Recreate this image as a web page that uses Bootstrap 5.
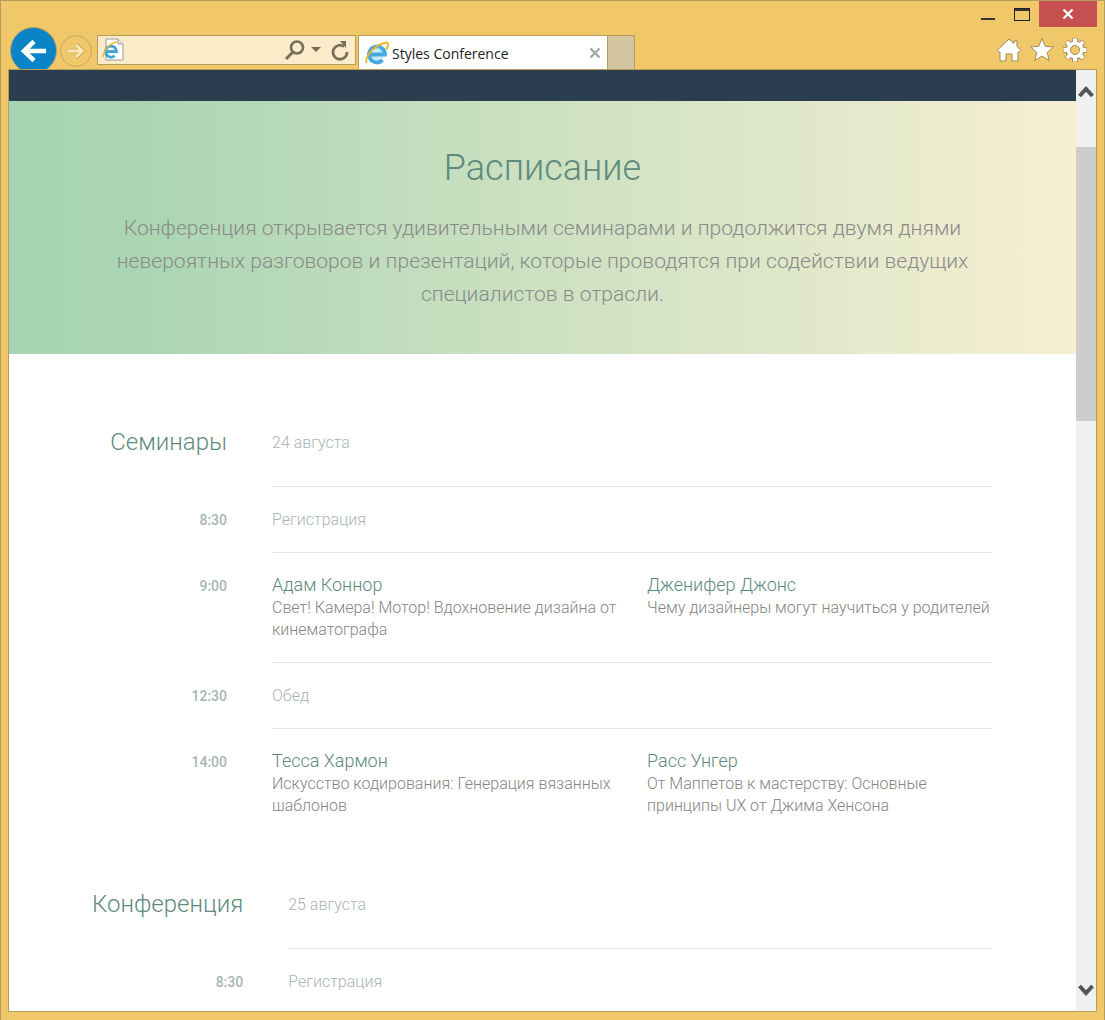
<!doctype html>
<html lang="ru">
<head>
<meta charset="utf-8">
<title>Styles Conference</title>
<link href="https://cdn.jsdelivr.net/npm/bootstrap@5.3.0/dist/css/bootstrap.min.css" rel="stylesheet">
<style>
html,body{height:100%;margin:0;overflow:hidden}
body{font-family:Roboto,"Liberation Sans",sans-serif;background:#f0c869}
.ie-window{height:1020px;width:1105px;border:1px solid #b89c5a;border-bottom-width:0;background:#f0c869;overflow:hidden}
.ie-caps{height:26px;padding-right:7px}
.cap-btn{height:26px;display:flex;align-items:center;justify-content:flex-end}
.cap-min{width:29px;padding:8px 14px 0 0}
.cap-max{width:30px;padding-right:9px}
.cap-close{width:58px;background:#c75050;justify-content:center}
.ie-bar{height:42px;padding-left:9px;position:relative}
.back-btn{width:47px;height:47px;border-radius:50%;background:#0a84c6;border:1px solid #b89c5a;flex:none;position:relative;z-index:1}
.fwd-btn{width:32px;height:32px;border-radius:50%;border:1px solid #c9a95f;flex:none;margin:8px 5px 0 3px;background:#f0c869}
.addr{width:259px;height:30px;margin-top:8px;border:1px solid #b89c5a;background:#faebc9;padding:0 6px 0 4px;flex:none}
.drop-ic{margin-left:5px}
.reload-ic{margin-left:10px}
.ie-tab{width:250px;height:35px;margin:8px 0 0 2px;background:#fff;border:1px solid #b89c5a;border-bottom:0;font-family:"Open Sans","Liberation Sans",sans-serif;font-size:14px;color:#222;padding:0 6px 0 6px;flex:none}
.tab-ic{margin-right:2px}
.tab-x{color:#a5a5a5}
.ie-new{width:27px;height:35px;margin-top:8px;background:#d3c4a0;border:1px solid #b89c5a;border-left:0;flex:none}
.tools{margin-left:auto;padding-right:16px;padding-top:10px;gap:7px}
.ie-frame{height:943px;margin:0 7px;border:1px solid #b89c5a;background:#fff;position:relative;z-index:2;overflow:hidden}
.page-pane{flex:1;min-width:0;overflow:hidden}
.scroll-col{width:20px;flex:none;background:#f0f0f0}
.scroll-arrow{height:42px;flex:none}
.scroll-thumb{height:274px;background:#cdcdcd;margin-top:35px}
.nav-strip{height:31px;background:#2a3e50}
.hero-band{height:253px;background:linear-gradient(90deg,#a6d4b0 0%,#a9d5b2 10%,#c9e0c0 46%,#f6efd2 100%);padding-top:44px;text-align:center}
.hero-title{font-size:36px;font-weight:300;color:#5f8a7e;line-height:47px;margin:0 0 19px}
.hero-text{width:900px;font-size:21.1px;font-weight:300;line-height:33px;color:#8a8a8a;margin:0 auto}
.sched-wrap{width:900px;margin:0 0 0 83px;padding-top:44px}
.sched{width:100%;margin-bottom:21px;font-size:16px;line-height:22px}
.sched td,.sched th{vertical-align:top;padding:22px 0 21px}
.sched th{width:20%;padding:22px 45px 21px 0;text-align:right;font-size:14px;font-weight:500;color:#a9b4b8;white-space:nowrap}
.sched td{border-bottom:1px solid #dfe3e6;color:#a9b4b8;font-weight:300}
.sched tr:last-child td{border-bottom:0;padding-bottom:22px}
.sched .sect-head th{font-size:24px;font-weight:300;color:#5f8a7e;line-height:44px;padding:22px 45px 21px 0}
.sched .sect-head td{line-height:44px;padding:23px 0 21px}
.spk-name{font-size:18px;font-weight:300;color:#5b8a7b;line-height:20px;margin-bottom:2px}
.spk-talk{color:#858585;font-weight:300;line-height:22px}
.spk-row{--bs-gutter-x:30px}
</style>
</head>
<body>
<div class="ie-window d-flex flex-column">
  <div class="ie-caps d-flex justify-content-end">
    <div class="cap-btn cap-min"><svg width="14" height="3"><rect width="14" height="2" y="1" fill="#333"/></svg></div>
    <div class="cap-btn cap-max"><svg width="16" height="13" viewBox="0 0 16 13"><rect x=".5" y=".5" width="15" height="12" fill="none" stroke="#222"/><rect x="1" y="1" width="14" height="2" fill="#333"/></svg></div>
    <div class="cap-btn cap-close"><svg width="12" height="10" viewBox="0 0 12 10"><path d="M1.500 .5l9 9M10.500 .5l-9 9" stroke="#fff" stroke-width="2.200" fill="none"/></svg></div>
  </div>
  <div class="ie-bar d-flex">
    <div class="back-btn d-flex align-items-center justify-content-center">
      <svg width="28" height="24" viewBox="0 0 28 24"><path d="M26 12H5M14 2.500L4 12l10 9.500" fill="none" stroke="#fff" stroke-width="4.500"/></svg>
    </div>
    <div class="fwd-btn d-flex align-items-center justify-content-center">
      <svg width="20" height="18" viewBox="0 0 20 18"><path d="M1 9h15M10 2.500l6.500 6.500L10 15.500" fill="none" stroke="#cfae65" stroke-width="4.600"/><path d="M1.500 9h14M10 3l6 6-6 6" fill="none" stroke="#fbe6b4" stroke-width="3"/></svg>
    </div>
    <div class="addr d-flex align-items-center">
      <svg width="22" height="24" viewBox="0 0 22 24">
        <path d="M4 1h12l5 5v16H4z" fill="#fff" stroke="#9a9a9a"/><path d="M16 1v5h5" fill="#eee" stroke="#9a9a9a"/>
        <path d="M4 13.500h10.500a5.500 5.500 0 1 0-1.800 4.200" fill="none" stroke="#3fa3de" stroke-width="2.800"/>
        <path d="M1 19C1 13 8 5 15 4" stroke="#f0b51e" stroke-width="1.400" fill="none"/>
      </svg>
      <svg class="ms-auto" width="22" height="22" viewBox="0 0 22 22"><circle cx="13" cy="8.500" r="6" fill="none" stroke="#776f5a" stroke-width="2.600"/><path d="M9 13l-7 7" stroke="#776f5a" stroke-width="3"/></svg>
      <svg class="drop-ic" width="10" height="6" viewBox="0 0 10 6"><path d="M0 0h10L5 5z" fill="#776f5a"/></svg>
      <svg class="reload-ic" width="18" height="21" viewBox="0 0 18 21"><path d="M13 6.500A7 7 0 1 0 16 12" fill="none" stroke="#776f5a" stroke-width="2.800"/><path d="M9 1l6 0 0 7z" fill="#776f5a"/></svg>
    </div>
    <div class="ie-tab d-flex align-items-center">
      <svg class="tab-ic" width="25" height="24" viewBox="0 0 25 24">
        <circle cx="12" cy="13" r="7" fill="#c5ecfa"/>
        <path d="M4 13.500h16a8 8 0 1 0-2.400 5.700" fill="none" stroke="#45a9e2" stroke-width="3.800"/>
        <path d="M1.500 22C0 15 10 3 22 1.500c2 1 1.500 4-1 7" stroke="#f0b51e" stroke-width="1.800" fill="none"/>
      </svg>
      <span class="text-nowrap">Styles Conference</span>
      <svg class="tab-x ms-auto" width="12" height="12" viewBox="0 0 12 12"><path d="M1.500 1.500l9 9M10.500 1.500l-9 9" stroke="currentColor" stroke-width="2.400"/></svg>
    </div>
    <div class="ie-new"></div>
    <div class="tools d-flex">
      <svg width="26" height="26" viewBox="0 0 26 26"><path d="M13 2l5 4.500V4h3v5.500l4 4-1.500 1.500H22v9h-6v-7h-6v7H4v-9H2.500L1 13.500z" fill="#fff" stroke="#a08a55"/></svg>
      <svg width="26" height="26" viewBox="0 0 26 26"><path d="M13 1.500l3.300 7.800 8.200.7-6.300 5.400 2 8.100-7.200-4.400-7.200 4.400 2-8.100L1.500 10l8.200-.7z" fill="#fff" stroke="#a08a55"/></svg>
      <svg width="26" height="26" viewBox="0 0 26 26">
        <g stroke="#a08a55" stroke-width="5.500"><path d="M13 1v24M1 13h24M4.500 4.500l17 17M21.500 4.500l-17 17"/></g>
        <circle cx="13" cy="13" r="9.500" fill="#a08a55"/>
        <g stroke="#fff" stroke-width="4"><path d="M13 1.500v23M1.500 13h23M4.900 4.900l16.200 16.200M21.100 4.900L4.900 21.100"/></g>
        <circle cx="13" cy="13" r="8.500" fill="#fff"/>
        <circle cx="13" cy="13" r="4.500" fill="#f0c869" stroke="#a08a55"/>
      </svg>
    </div>
  </div>
  <div class="ie-frame d-flex">
    <div class="page-pane">
      <div class="nav-strip"></div>
      <section class="hero-band">
        <h1 class="hero-title">Расписание</h1>
        <p class="hero-text">Конференция открывается удивительными семинарами и продолжится двумя днями невероятных разговоров и презентаций, которые проводятся при содействии ведущих специалистов в отрасли.</p>
      </section>
      <div class="sched-wrap">
        <table class="sched">
          <tr class="sect-head"><th>Семинары</th><td>24 августа</td></tr>
          <tr><th>8:30</th><td>Регистрация</td></tr>
          <tr><th>9:00</th><td><div class="row spk-row">
            <div class="col-6"><div class="spk-name">Адам Коннор</div><div class="spk-talk">Свет! Камера! Мотор! Вдохновение дизайна от кинематографа</div></div>
            <div class="col-6"><div class="spk-name">Дженифер Джонс</div><div class="spk-talk">Чему дизайнеры могут научиться у родителей</div></div>
          </div></td></tr>
          <tr><th>12:30</th><td>Обед</td></tr>
          <tr><th>14:00</th><td><div class="row spk-row">
            <div class="col-6"><div class="spk-name">Тесса Хармон</div><div class="spk-talk">Искусство кодирования: Генерация вязанных шаблонов</div></div>
            <div class="col-6"><div class="spk-name">Расс Унгер</div><div class="spk-talk">От Маппетов к мастерству: Основные принципы UX от Джима Хенсона</div></div>
          </div></td></tr>
        </table>
        <table class="sched">
          <tr class="sect-head"><th>Конференция</th><td>25 августа</td></tr>
          <tr><th>8:30</th><td>Регистрация</td></tr>
        </table>
      </div>
    </div>
    <div class="scroll-col d-flex flex-column">
      <div class="scroll-arrow d-flex align-items-center justify-content-center"><svg width="16" height="13" viewBox="0 0 16 13"><path d="M1.500 11L8 4l6.500 7" fill="none" stroke="#555" stroke-width="4"/></svg></div>
      <div class="scroll-thumb"></div>
      <div class="mt-auto scroll-arrow d-flex align-items-center justify-content-center"><svg width="16" height="13" viewBox="0 0 16 13"><path d="M1.500 2L8 9l6.500-7" fill="none" stroke="#555" stroke-width="4"/></svg></div>
    </div>
  </div>
</div>
</body>
</html>
